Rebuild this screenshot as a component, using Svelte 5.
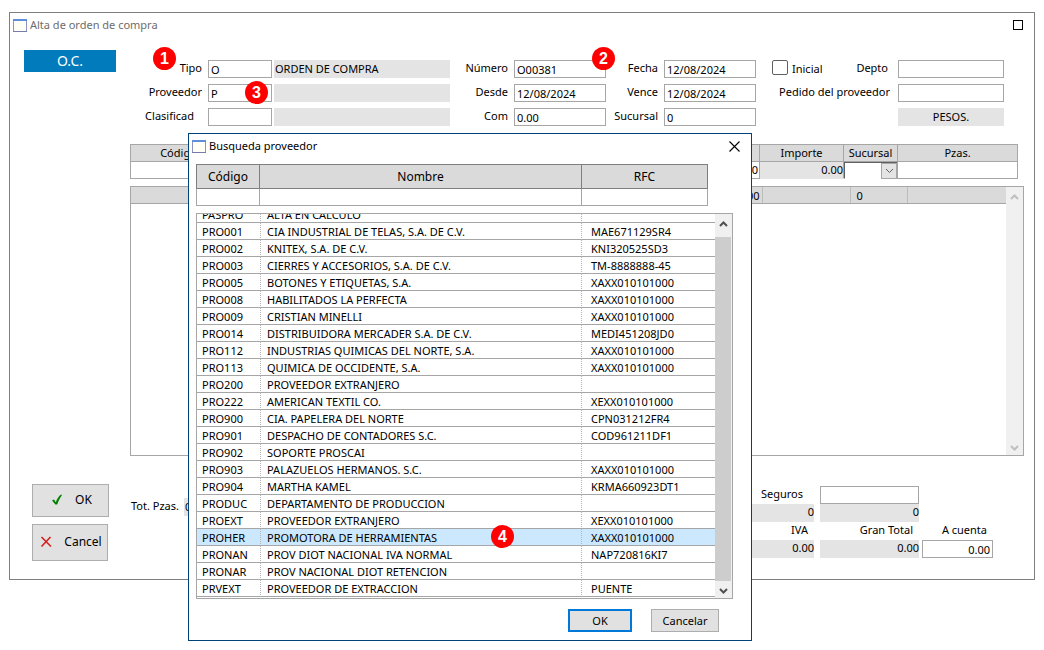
<script>
  const order = {
    tipo: 'O',
    tipoNombre: 'ORDEN DE COMPRA',
    numero: 'O00381',
    fecha: '12/08/2024',
    desde: '12/08/2024',
    vence: '12/08/2024',
    proveedor: 'P',
    com: '0.00',
    sucursal: '0',
    moneda: 'PESOS.'
  };

  const providers = [
    { code: 'PASPRO', name: 'ALTA EN CALCULO', rfc: '' },
    { code: 'PRO001', name: 'CIA INDUSTRIAL DE TELAS, S.A. DE C.V.', rfc: 'MAE671129SR4' },
    { code: 'PRO002', name: 'KNITEX, S.A. DE C.V.', rfc: 'KNI320525SD3' },
    { code: 'PRO003', name: 'CIERRES Y ACCESORIOS, S.A. DE C.V.', rfc: 'TM-8888888-45' },
    { code: 'PRO005', name: 'BOTONES Y ETIQUETAS, S.A.', rfc: 'XAXX010101000' },
    { code: 'PRO008', name: 'HABILITADOS LA PERFECTA', rfc: 'XAXX010101000' },
    { code: 'PRO009', name: 'CRISTIAN MINELLI', rfc: 'XAXX010101000' },
    { code: 'PRO014', name: 'DISTRIBUIDORA MERCADER S.A. DE C.V.', rfc: 'MEDI451208JD0' },
    { code: 'PRO112', name: 'INDUSTRIAS QUIMICAS DEL NORTE, S.A.', rfc: 'XAXX010101000' },
    { code: 'PRO113', name: 'QUIMICA DE OCCIDENTE, S.A.', rfc: 'XAXX010101000' },
    { code: 'PRO200', name: 'PROVEEDOR EXTRANJERO', rfc: '' },
    { code: 'PRO222', name: 'AMERICAN TEXTIL CO.', rfc: 'XEXX010101000' },
    { code: 'PRO900', name: 'CIA. PAPELERA DEL NORTE', rfc: 'CPN031212FR4' },
    { code: 'PRO901', name: 'DESPACHO DE CONTADORES S.C.', rfc: 'COD961211DF1' },
    { code: 'PRO902', name: 'SOPORTE PROSCAI', rfc: '' },
    { code: 'PRO903', name: 'PALAZUELOS HERMANOS. S.C.', rfc: 'XAXX010101000' },
    { code: 'PRO904', name: 'MARTHA KAMEL', rfc: 'KRMA660923DT1' },
    { code: 'PRODUC', name: 'DEPARTAMENTO DE PRODUCCION', rfc: '' },
    { code: 'PROEXT', name: 'PROVEEDOR EXTRANJERO', rfc: 'XEXX010101000' },
    { code: 'PROHER', name: 'PROMOTORA DE HERRAMIENTAS', rfc: 'XAXX010101000' },
    { code: 'PRONAN', name: 'PROV DIOT NACIONAL IVA NORMAL', rfc: 'NAP720816KI7' },
    { code: 'PRONAR', name: 'PROV NACIONAL DIOT RETENCION', rfc: '' },
    { code: 'PRVEXT', name: 'PROVEEDOR DE EXTRACCION', rfc: 'PUENTE' }
  ];

  // step markers pinned over the windows
  const steps = [
    { n: 1, x: 153, y: 47 },
    { n: 2, x: 592, y: 47 },
    { n: 3, x: 245, y: 81 },
    { n: 4, x: 491, y: 525 }
  ];

  let selected = $state('PROHER');
</script>

{#snippet windowIcon()}
  <svg class="window-icon" viewBox="0 0 14 13" aria-hidden="true">
    <rect x="0.5" y="0.5" width="13" height="12" fill="#fffff5" stroke="#8f93c4" />
    <rect width="14" height="2" fill="#5f8fdc" />
    <path d="M0 12.5h14" stroke="#777ba8" />
  </svg>
{/snippet}

{#snippet chevron(dir)}
  <svg class="chevron" viewBox="0 0 9 6" aria-hidden="true">
    <path d={dir === 'up' ? 'M1 5 4.5 1.5 8 5' : 'M1 1 4.5 4.5 8 1'} fill="none" stroke="currentColor" stroke-width="2" />
  </svg>
{/snippet}

<div class="desktop">
  <section class="window">
    <header class="titlebar">
      {@render windowIcon()}
      <h1>Alta de orden de compra</h1>
      <button class="maximize" aria-label="Maximizar"></button>
    </header>

    <div class="body">
      <aside class="side">
        <div class="doc-type">O.C.</div>
        <div class="actions">
          <button class="btn ok">
            <svg width="12" height="12" viewBox="0 0 12 12" aria-hidden="true">
              <path d="M1 6.5 3 5.5 4.8 8.2C6 4.8 7.9 2 10 0.5L11 1C9 3.8 7.4 7 6.2 10.5H4.4Z" fill="#008000" />
            </svg>
            OK
          </button>
          <button class="btn cancel">
            <svg width="12" height="12" viewBox="0 0 12 12" aria-hidden="true">
              <path d="M1.5 1 11 10.5M10.5 1 1.5 10.5" fill="none" stroke="#d42020" stroke-width="1.6" />
            </svg>
            Cancel
          </button>
        </div>
      </aside>

      <main class="main">
        <div class="form">
          <label for="tipo">Tipo</label>
          <input id="tipo" value={order.tipo} />
          <output class="desc">{order.tipoNombre}</output>
          <label for="numero">Número</label>
          <input id="numero" value={order.numero} />
          <label for="fecha">Fecha</label>
          <input id="fecha" value={order.fecha} />
          <div class="inicial-cell">
            <input type="checkbox" id="inicial" />
            <label class="check-label" for="inicial">Inicial</label>
            <label class="depto" for="depto">Depto</label>
          </div>
          <input id="depto" />

          <label for="proveedor">Proveedor</label>
          <input id="proveedor" value={order.proveedor} />
          <output class="desc"></output>
          <label for="desde">Desde</label>
          <input id="desde" value={order.desde} />
          <label for="vence">Vence</label>
          <input id="vence" value={order.vence} />
          <label class="pedido" for="pedido">Pedido del proveedor</label>
          <input id="pedido" />

          <label class="indent" for="clasificad">Clasificad</label>
          <input id="clasificad" />
          <output class="desc"></output>
          <label for="com">Com</label>
          <input id="com" value={order.com} />
          <label for="sucursal">Sucursal</label>
          <input id="sucursal" value={order.sucursal} />
          <output class="currency">{order.moneda}</output>
        </div>

        <table class="entry">
          <colgroup>
            <col class="c-code" /><col /><col class="c-amount" /><col class="c-branch" /><col class="c-pieces" />
          </colgroup>
          <thead>
            <tr><th>Código</th><th></th><th>Importe</th><th>Sucursal</th><th>Pzas.</th></tr>
          </thead>
          <tbody>
            <tr>
              <td><input aria-label="Código" /></td>
              <td><input class="num" aria-label="Costo" value="0.00" /></td>
              <td class="readonly">0.00</td>
              <td>
                <div class="select">
                  <select aria-label="Sucursal"><option></option></select>
                  <span class="drop">{@render chevron('down')}</span>
                </div>
              </td>
              <td><input aria-label="Pzas." /></td>
            </tr>
          </tbody>
        </table>

        <div class="items">
          <div class="items-view">
            <table>
              <colgroup>
                <col /><col class="i-amount" /><col class="i-branch" /><col class="i-pieces" />
              </colgroup>
              <tbody>
                <tr><td class="num">0.00</td><td></td><td>0</td><td></td></tr>
              </tbody>
            </table>
          </div>
          <div class="scrollbar disabled">
            <button aria-label="Subir">{@render chevron('up')}</button>
            <button aria-label="Bajar">{@render chevron('down')}</button>
          </div>
        </div>

        <footer class="totals">
          <div class="pieces">
            <span>Tot. Pzas.</span>
            <output>0</output>
          </div>
          <div class="sums">
            <label class="seguros" for="seguros">Seguros</label>
            <input id="seguros" />
            <span></span>
            <output class="first">0</output>
            <output>0</output>
            <span></span>
            <span class="cap first">IVA</span>
            <span class="cap">Gran Total</span>
            <label class="cap" for="acuenta">A cuenta</label>
            <output class="first">0.00</output>
            <output>0.00</output>
            <input id="acuenta" class="num" value="0.00" />
          </div>
        </footer>
      </main>
    </div>
  </section>

  <div class="dialog" role="dialog" aria-labelledby="dialog-title">
    <header class="dialog-title">
      {@render windowIcon()}
      <h2 id="dialog-title">Busqueda proveedor</h2>
      <button class="close" aria-label="Cerrar">
        <svg width="11" height="11" viewBox="0 0 11 11" aria-hidden="true">
          <path d="M0.5 0.5 10.5 10.5M10.5 0.5 0.5 10.5" stroke="#000" stroke-width="1.1" />
        </svg>
      </button>
    </header>

    <table class="search">
      <colgroup><col class="s-code" /><col /><col class="s-rfc" /></colgroup>
      <thead>
        <tr><th>Código</th><th>Nombre</th><th>RFC</th></tr>
      </thead>
      <tbody>
        <tr>
          <td><input aria-label="Código" /></td>
          <td><input aria-label="Nombre" /></td>
          <td><input aria-label="RFC" /></td>
        </tr>
      </tbody>
    </table>

    <div class="list">
      <div class="list-view">
        <table class="providers">
          <colgroup><col class="p-code" /><col /><col class="p-rfc" /></colgroup>
          <tbody>
            {#each providers as p (p.code)}
              <tr class:selected={p.code === selected} onclick={() => (selected = p.code)}>
                <td>{p.code}</td>
                <td>{p.name}</td>
                <td>{p.rfc}</td>
              </tr>
            {/each}
          </tbody>
        </table>
      </div>
      <div class="scrollbar">
        <button aria-label="Subir">{@render chevron('up')}</button>
        <div class="thumb"></div>
        <button aria-label="Bajar">{@render chevron('down')}</button>
      </div>
    </div>

    <div class="dialog-actions">
      <button class="btn default">OK</button>
      <button class="btn">Cancelar</button>
    </div>
  </div>

  {#each steps as step}
    <span class="step" style="left: {step.x}px; top: {step.y}px">{step.n}</span>
  {/each}
</div>

<style>
  :global(body) {
    background: #fff;
  }

  .desktop {
    position: relative;
    min-height: 100vh;
    padding: 12px 9px;
    font-family: 'Noto Sans', 'Open Sans', sans-serif;
    font-size: 11px;
    line-height: 16px;
    color: #000;
  }

  .desktop,
  .desktop * {
    box-sizing: border-box;
  }

  h1,
  h2 {
    margin: 0;
    font-size: 11px;
    font-weight: 400;
  }

  button,
  input,
  select {
    font: inherit;
    color: inherit;
    border-radius: 0;
  }

  input,
  output {
    display: block;
    width: 100%;
    min-width: 0;
    height: 18px;
    margin: 0;
    padding: 0 2px;
    line-height: 16px;
  }

  input {
    border: 1px solid #a6a6a6;
    background: #fff;
    outline: none;
  }

  output {
    padding: 1px 1px;
    background: #e4e4e4;
  }

  .num {
    text-align: right;
  }

  table {
    width: 100%;
    table-layout: fixed;
    border-collapse: collapse;
  }

  th,
  td {
    padding: 0;
    font-weight: 400;
  }

  .window {
    border: 1px solid #7f7f7f;
  }

  .titlebar {
    display: flex;
    align-items: center;
    height: 24px;
    padding: 0 11px 0 3px;
    gap: 3px;
    color: #6d6d6d;
  }

  .window-icon {
    width: 14px;
    height: 13px;
  }

  .maximize {
    width: 10px;
    height: 10px;
    margin-left: auto;
    padding: 0;
    border: 1px solid #000;
    background: #fff;
  }

  .body {
    display: flex;
    padding: 13px 10px 18px 14px;
  }

  .side {
    display: flex;
    flex-direction: column;
    justify-content: space-between;
    flex: 0 0 106px;
  }

  .doc-type {
    width: 92px;
    background: #027bbd;
    color: #fff;
    font-size: 14px;
    line-height: 22px;
    text-align: center;
  }

  .actions {
    display: flex;
    flex-direction: column;
    gap: 7px;
    padding-left: 8px;
  }

  .btn {
    padding: 0;
    border: 1px solid #adadad;
    background: #e1e1e1;
  }

  .ok,
  .cancel {
    display: flex;
    align-items: center;
    justify-content: center;
    width: 77px;
    height: 33px;
    padding: 0 0 2px 2px;
    gap: 12px;
    font-size: 12px;
  }

  .cancel {
    width: 76px;
    height: 37px;
  }

  .main {
    flex: 1;
    min-width: 0;
    padding-top: 10px;
  }

  .form {
    display: grid;
    grid-template-columns: 78px 64px minmax(0, 1fr) 64px 92px 58px 92px 142px 106px;
    row-gap: 6px;
    margin-right: 20px;
  }

  .form label {
    padding-right: 6px;
    text-align: right;
    white-space: nowrap;
  }

  .form .pedido {
    padding-right: 8px;
  }

  .form .indent {
    padding-right: 14px;
  }

  .desc {
    width: auto;
    margin-left: 2px;
  }

  .currency {
    grid-column: 9;
    text-align: center;
  }

  .inicial-cell {
    display: flex;
    padding: 0 4px 0 16px;
  }

  .inicial-cell input {
    flex: none;
    appearance: none;
    width: 16px;
    height: 15px;
    border: 1px solid #606060;
    border-radius: 2px;
  }

  .inicial-cell .check-label {
    flex: 1;
    padding: 1px 0 0 4px;
    text-align: left;
  }

  .entry {
    width: calc(100% - 6px);
    margin-top: 18px;
  }

  .c-code {
    width: 96px;
  }

  .c-amount {
    width: 84px;
  }

  .c-branch {
    width: 54px;
  }

  .c-pieces {
    width: 120px;
  }

  .entry th,
  .entry td {
    height: 17px;
    border: 1px solid #a6a6a6;
  }

  .entry th {
    background: #dadada;
  }

  .entry input {
    height: 16px;
    border: 0;
    padding: 0 1px;
  }

  .entry .readonly {
    border-bottom-color: #e4e4e4;
    background: #e4e4e4;
    text-align: right;
  }

  .select {
    display: grid;
    grid-template-columns: 1fr 16px;
    height: 16px;
    border-top: 1px solid #606060;
    border-left: 1px solid #606060;
  }

  .select select {
    grid-area: 1 / 1 / 2 / 3;
    appearance: none;
    padding: 0;
    border: 0;
    background: #fff;
  }

  .drop {
    display: flex;
    align-items: center;
    justify-content: center;
    grid-area: 1 / 2;
    border: 1px solid #a6a6a6;
    background: #e4e4e4;
    color: #606060;
    pointer-events: none;
  }

  .chevron {
    width: 9px;
    height: 6px;
  }

  .drop .chevron path {
    stroke-width: 1;
  }

  .items {
    display: flex;
    height: 270px;
    margin-top: 7px;
    border: 1px solid #a6a6a6;
  }

  .items-view {
    flex: 1;
  }

  .i-amount {
    width: 88px;
  }

  .i-branch {
    width: 57px;
  }

  .i-pieces {
    width: 99px;
  }

  .items td {
    height: 16px;
    padding: 1px 2px 0 6px;
    border-right: 1px solid #bdbdbd;
    border-bottom: 1px solid #a6a6a6;
    background: #dadada;
    line-height: 15px;
  }

  .items td:last-child {
    border-right: 0;
  }

  .scrollbar {
    display: flex;
    flex-direction: column;
    justify-content: space-between;
    width: 17px;
    background: #f0f0f0;
    color: #505050;
  }

  .scrollbar.disabled {
    color: #bfbfbf;
  }

  .scrollbar button {
    height: 17px;
    padding: 0;
    border: 0;
    background: #f0f0f0;
    color: inherit;
    line-height: 10px;
  }

  .thumb {
    flex: 1;
    margin: 6px 1px 0 0;
    background: #cdcdcd;
  }

  .totals {
    display: flex;
    justify-content: space-between;
    margin: 30px 31px 3px 0;
  }

  .pieces {
    display: flex;
    gap: 5px;
    height: 18px;
    margin-top: 12px;
    padding-left: 1px;
  }

  .pieces span {
    white-space: nowrap;
  }

  .pieces output {
    width: 60px;
  }

  .sums {
    display: grid;
    grid-template-columns: 97px 99px 71px;
    grid-auto-rows: 18px;
    column-gap: 3px;
    text-align: right;
  }

  .sums output {
    width: auto;
    padding: 0 0 2px;
  }

  .sums .first {
    margin-right: 3px;
  }

  .seguros {
    padding-right: 14px;
  }

  .cap {
    padding-right: 6px;
  }

  .dialog {
    position: absolute;
    top: 133px;
    left: 188px;
    width: 564px;
    padding: 0 18px 8px 7px;
    border: 1px solid #00437a;
    background: #fff;
  }

  .dialog-title {
    display: flex;
    align-items: center;
    gap: 3px;
    height: 24px;
    margin: 0 -7px 6px -4px;
  }

  .close {
    display: flex;
    margin-left: auto;
    padding: 0;
    border: 0;
    background: none;
  }

  .search {
    width: 512px;
  }

  .s-code {
    width: 63px;
  }

  .s-rfc {
    width: 126px;
  }

  .p-code {
    width: 64px;
  }

  .p-rfc {
    width: 133px;
  }

  .search th {
    height: 24px;
    border: 1px solid #7f7f7f;
    background: #dadada;
    font-size: 12px;
  }

  .search td {
    height: 17px;
    border: 1px solid #a6a6a6;
  }

  .search input {
    height: 16px;
    border: 0;
  }

  .list {
    display: flex;
    height: 386px;
    margin-top: 7px;
    border: 1px solid #a6a6a6;
  }

  .list-view {
    display: flex;
    flex-direction: column;
    justify-content: flex-end;
    flex: 1;
    padding-bottom: 1px;
    overflow: hidden;
  }

  .providers {
    flex: none;
    border-collapse: separate;
    border-spacing: 0;
  }

  .providers td {
    height: 17px;
    padding: 2px 0 0 6px;
    border-right: 1px dotted #b5b5b5;
    border-bottom: 1px solid #a6a6a6;
    line-height: 14px;
    white-space: nowrap;
  }

  .providers td:first-child {
    padding-left: 5px;
  }

  .providers td:last-child {
    padding-left: 9px;
    border-right: 0;
  }

  .providers .selected td {
    background: #cce8ff;
  }

  .dialog-actions {
    display: flex;
    justify-content: flex-end;
    gap: 19px;
    margin: 10px 14px 0 0;
  }

  .dialog-actions .btn {
    width: 68px;
    height: 23px;
  }

  .dialog-actions .default {
    width: 64px;
    border: 2px solid #0078d7;
  }

  .step {
    position: absolute;
    width: 23px;
    height: 23px;
    border-radius: 50%;
    background: #f00;
    color: #fff;
    font-family: 'Liberation Sans', Arial, sans-serif;
    font-size: 16px;
    font-weight: 700;
    line-height: 23px;
    text-align: center;
  }
</style>
